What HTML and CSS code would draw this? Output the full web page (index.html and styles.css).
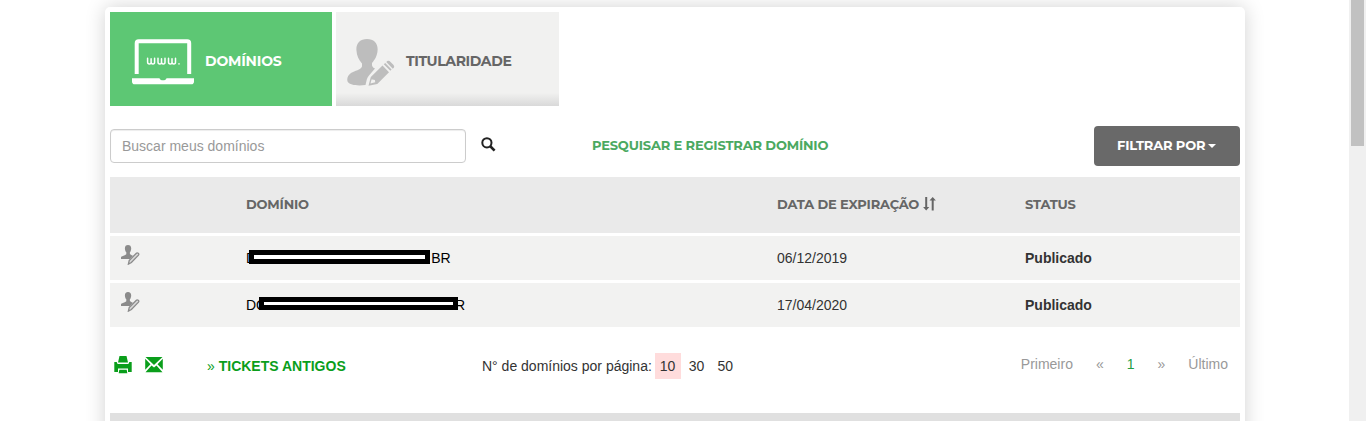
FILE: index.html
```html
<!DOCTYPE html>
<html lang="pt-br">
<head>
    <meta charset="utf-8">
    <title>Meus Domínios</title>
    <link rel="stylesheet" href="styles.css">
</head>
<body>
    <svg class="defs">
        <symbol id="user-edit" viewBox="0 0 20 20">
            <path fill="#8b8b8b" d="M7 0c2 0 3.300 1.300 3.200 3.500C10.100 5.500 9.600 6.500 8.900 7.300v1.800c.8.900 2 1.300 3.100 1.700L8.800 14H0v-1.500c0-1.600 3.800-1.700 5.300-3.300V7.300C4.500 6.500 4 5.500 3.900 3.500 3.800 1.300 5 0 7 0z"/>
            <path fill="#d8d8d8" stroke="#8b8b8b" stroke-width="1.300" d="M8.200 15.500l7.200-7.300c1.100-1.100 3.100.7 2.100 1.900l-7.100 7.400-3 1.600z"/>
        </symbol>
    </svg>
    <div class="page">
        <div class="panel">
            <div class="tabs">
                <a class="tab active">
                    <svg class="icon-laptop" width="62" height="46" viewBox="0 0 62 46">
                        <path fill="none" stroke="#fff" stroke-width="4" d="M4.700 35V4.200Q4.700 2.200 6.700 2.200H55.200Q57.200 2.200 57.200 4.200V35"/>
                        <path fill="#fff" d="M0 39.200h27.500c.5 1.600 1.500 2 3.500 2s3-.4 3.500-2H62v3.200q0 2.800-2.800 2.800H2.800Q0 45.200 0 42.400z"/>
                        <path fill="none" stroke="#fff" stroke-width="1.500" stroke-linecap="round" stroke-linejoin="round" d="M15.600 19.200v3.800q0 2 1.800 2t1.700-2v-3.300m0 3.300q0 2 1.800 2t1.700-2v-3.800M26 19.200v3.800q0 2 1.800 2t1.700-2v-3.300m0 3.300q0 2 1.800 2t1.700-2v-3.800M36.500 19.200v3.800q0 2 1.800 2t1.700-2v-3.300m0 3.300q0 2 1.800 2t1.700-2v-3.800M47 24.800v.1"/>
                    </svg>
                    <span class="tab-name">DOMÍNIOS</span>
                </a>
                <a class="tab">
                    <svg class="icon-user" width="48" height="48" viewBox="0 0 48 48">
                        <path fill="#bdbdbd" d="M20 0c7 0 11 4.500 10.600 11-.3 6-2.700 9.500-5.600 13v2.500c.5 1.500 1.500 2.500 3 3l-6 7c-2 2-2.500 5-3.500 9.500C10 47 3 46 .8 43-.5 40 .5 36.500 4 34c4-2.500 9.500-3 11-6.500v-3C12 21 9.700 17 9.400 11 9 4.500 13 0 20 0z"/>
                        <path fill="#bdbdbd" fill-rule="evenodd" d="M21.500 46.800l2.300-8.700L35.500 26.500l6.500 6.700L30.300 45zM24.500 40.500l-1 4 4.700-1.200-.3-2.400-2.400-.3z"/>
                        <path fill="#bdbdbd" d="M36.800 25.200l1.400-1.300 6.400 6.600-1.300 1.300zM39.300 22.900c1.500-1.700 3-1.200 4.500.3l2.300 2.300c1.600 1.600 1.500 2.900-.3 4.300z"/>
                    </svg>
                    <span class="tab-name narrow">TITULARIDADE</span>
                </a>
            </div>

            <div class="search-bar">
                <input type="text" class="search-input" placeholder="Buscar meus domínios">
                <svg class="icon-search" width="15" height="15" viewBox="0 0 15 15">
                    <circle cx="5.900" cy="5.800" r="4.600" fill="none" stroke="#222" stroke-width="2"/>
                    <path stroke="#222" stroke-width="2.600" d="M9 9l4.600 4.600"/>
                </svg>
                <a class="register">PESQUISAR E REGISTRAR DOMÍNIO</a>
                <button class="filter"><span class="filter-name">FILTRAR POR</span><span class="caret"></span></button>
            </div>

            <div class="table">
                <div class="row head">
                    <span></span>
                    <span class="th-domain">DOMÍNIO</span>
                    <span class="sortable">
                        <span class="th-date">DATA DE EXPIRAÇÃO</span>
                        <svg width="14" height="14" viewBox="0 0 14 14">
                            <path fill="#666" d="M2.200 0h2v10h2.100L3.200 13.500.1 10h2.100zM8.700 13.500h2v-10h2.200L9.700 0 6.500 3.500h2.200z"/>
                        </svg>
                    </span>
                    <span class="th-status">STATUS</span>
                </div>
                <div class="row">
                    <svg class="icon-row" width="20" height="20"><use href="#user-edit"/></svg>
                    <span class="domain">D<i class="hidden-name first"></i>BR</span>
                    <span>06/12/2019</span>
                    <b>Publicado</b>
                </div>
                <div class="row">
                    <svg class="icon-row" width="20" height="20"><use href="#user-edit"/></svg>
                    <span class="domain">DO<i class="hidden-name second"></i>R</span>
                    <span>17/04/2020</span>
                    <b>Publicado</b>
                </div>
            </div>

            <div class="footer">
                <svg class="icon-print" width="18" height="18" viewBox="0 0 18 18">
                    <path fill="#0a9e1b" d="M5.500 0h7l1.500 6.500H4zM.3 6h2.400l.9 2h10.800l.9-2h2.400v10H14v-3.500H4V16H.3zM5.300 13.700h7.400l.6 3.500H4.700z"/>
                </svg>
                <svg class="icon-mail" width="18" height="16" viewBox="0 0 18 16">
                    <path fill="#0a9e1b" d="M.5 0h17L9 8zM.2 1.800l5.300 5.400L.2 12.800zM17.800 1.800v11l-5.300-5.600zM.5 15.200l6-6.800L9 10.600l2.500-2.200 6 6.800z"/>
                </svg>
                <a class="tickets"><span class="raquo">»</span> TICKETS ANTIGOS</a>
                <div class="per-page">
                    <span>N° de domínios por página:</span>
                    <a class="size selected">10</a>
                    <a class="size">30</a>
                    <a class="size">50</a>
                </div>
                <div class="pagination">
                    <a>Primeiro</a>
                    <a>«</a>
                    <a class="current">1</a>
                    <a>»</a>
                    <a>Último</a>
                </div>
            </div>
            <div class="bottom-bar"></div>
        </div>
    </div>
    <div class="scrollbar"><div class="thumb"></div></div>
</body>
</html>
```

FILE: styles.css
```css
* {
    box-sizing: border-box;
}

body {
    display: flex;
    height: 421px;
    margin: 0;
    background: #fff;
    color: #333;
    font-family: "Liberation Sans", Arial, sans-serif;
    font-size: 14px;
    line-height: 20px;
}

.defs {
    display: none;
}

.page {
    flex: 1;
    height: 421px;
    padding: 7px 104px 0 105px;
    overflow: hidden;
}

.panel {
    height: 450px;
    padding: 5px 5px 0;
    background: #fff;
    border-radius: 5px;
    box-shadow: 0 0 20px rgba(0, 0, 0, 0.18);
}

.tabs {
    display: flex;
    gap: 4px;
}

.tab {
    display: flex;
    align-items: center;
    width: 223px;
    height: 94px;
    background: linear-gradient(#f1f1f0 86%, #d9d9d9);
    color: #666;
    padding: 4px 0 0 11px;
}

.tab.active {
    width: 222px;
    padding-left: 22px;
    background: #5dc774;
    color: #fff;
}

.icon-laptop {
    margin: 1px 11px 0 0;
}

.icon-user {
    margin: 4px 11px 0 0;
}

.tab-name,
.register,
.filter,
.head {
    font-family: Montserrat, Inter, sans-serif;
    font-weight: bold;
    letter-spacing: -0.18px;
}

.tab-name.narrow {
    letter-spacing: -0.38px;
}

.search-bar {
    display: flex;
    height: 71px;
    padding-top: 20px;
}

.search-input {
    width: 356px;
    height: 34px;
    margin-top: 3px;
    padding: 6px 11px;
    border: 1px solid #ccc;
    border-radius: 4px;
    box-shadow: inset 0 1px 1px rgba(0, 0, 0, 0.075);
    font: inherit;
}

.search-input::placeholder {
    color: #999;
}

.icon-search {
    margin: 11px 0 0 15px;
}

.register {
    margin: 9px 0 0 96px;
    color: #4ba961;
    font-size: 13px;
}

.filter {
    display: flex;
    align-items: center;
    width: 146px;
    height: 40px;
    margin-left: auto;
    padding: 0 0 2px 23px;
    border: none;
    border-radius: 4px;
    background: #696969;
    color: #fff;
    font-size: 13px;
}

.caret {
    margin: 2px 0 0 3px;
    border-top: 4px solid #fff;
    border-left: 4px solid transparent;
    border-right: 4px solid transparent;
}

.table {
    display: grid;
    gap: 3px;
}

.row {
    display: grid;
    grid-template-columns: 136px 531px 248px 1fr;
    align-items: center;
    height: 44px;
    background: #f2f2f1;
}

.row.head {
    height: 56px;
    padding-bottom: 2px;
    background: #eaeaea;
    color: #666;
    font-size: 13px;
}

.sortable {
    display: flex;
    align-items: center;
    gap: 4px;
}

.icon-row {
    margin: -6px 0 0 11px;
}

.domain {
    display: flex;
    align-items: center;
    color: #000;
}

/* covers the private part of the domain name */
.hidden-name {
    position: relative;
    border: 5px solid #000;
    background: #fff;
}

.hidden-name.first {
    width: 181px;
    height: 14px;
    margin: -2px 1px 0 -7px;
}

.hidden-name.second {
    width: 199px;
    height: 13px;
    margin: -3px -3px 0 -8px;
}

.footer {
    display: flex;
    height: 86px;
    padding-top: 26px;
}

.icon-print {
    margin: 3px 0 0 4px;
}

.icon-mail {
    margin: 4px 0 0 13px;
}

.tickets {
    width: 275px;
    margin: 3px 0 0 44px;
    color: #0a9e1b;
    font-weight: bold;
}

.raquo {
    font-weight: normal;
}

.per-page {
    display: flex;
    padding-top: 3px;
}

.size {
    height: 26px;
    margin: -3px 0 0 3px;
    padding: 3px 5px;
}

.size.selected {
    width: 26px;
    background: #ffdcdc;
}

.pagination {
    display: flex;
    margin-left: auto;
    color: #999;
}

.pagination a {
    margin-left: -1px;
    padding: 1px 12px;
}

.pagination .current {
    color: #1f9e45;
}

.bottom-bar {
    height: 8px;
    background: #e0e0e0;
}

.scrollbar {
    width: 17px;
    padding: 0 2px;
    background: #f0f0f0;
}

.thumb {
    height: 146px;
    background: #c1c1c1;
}
```
